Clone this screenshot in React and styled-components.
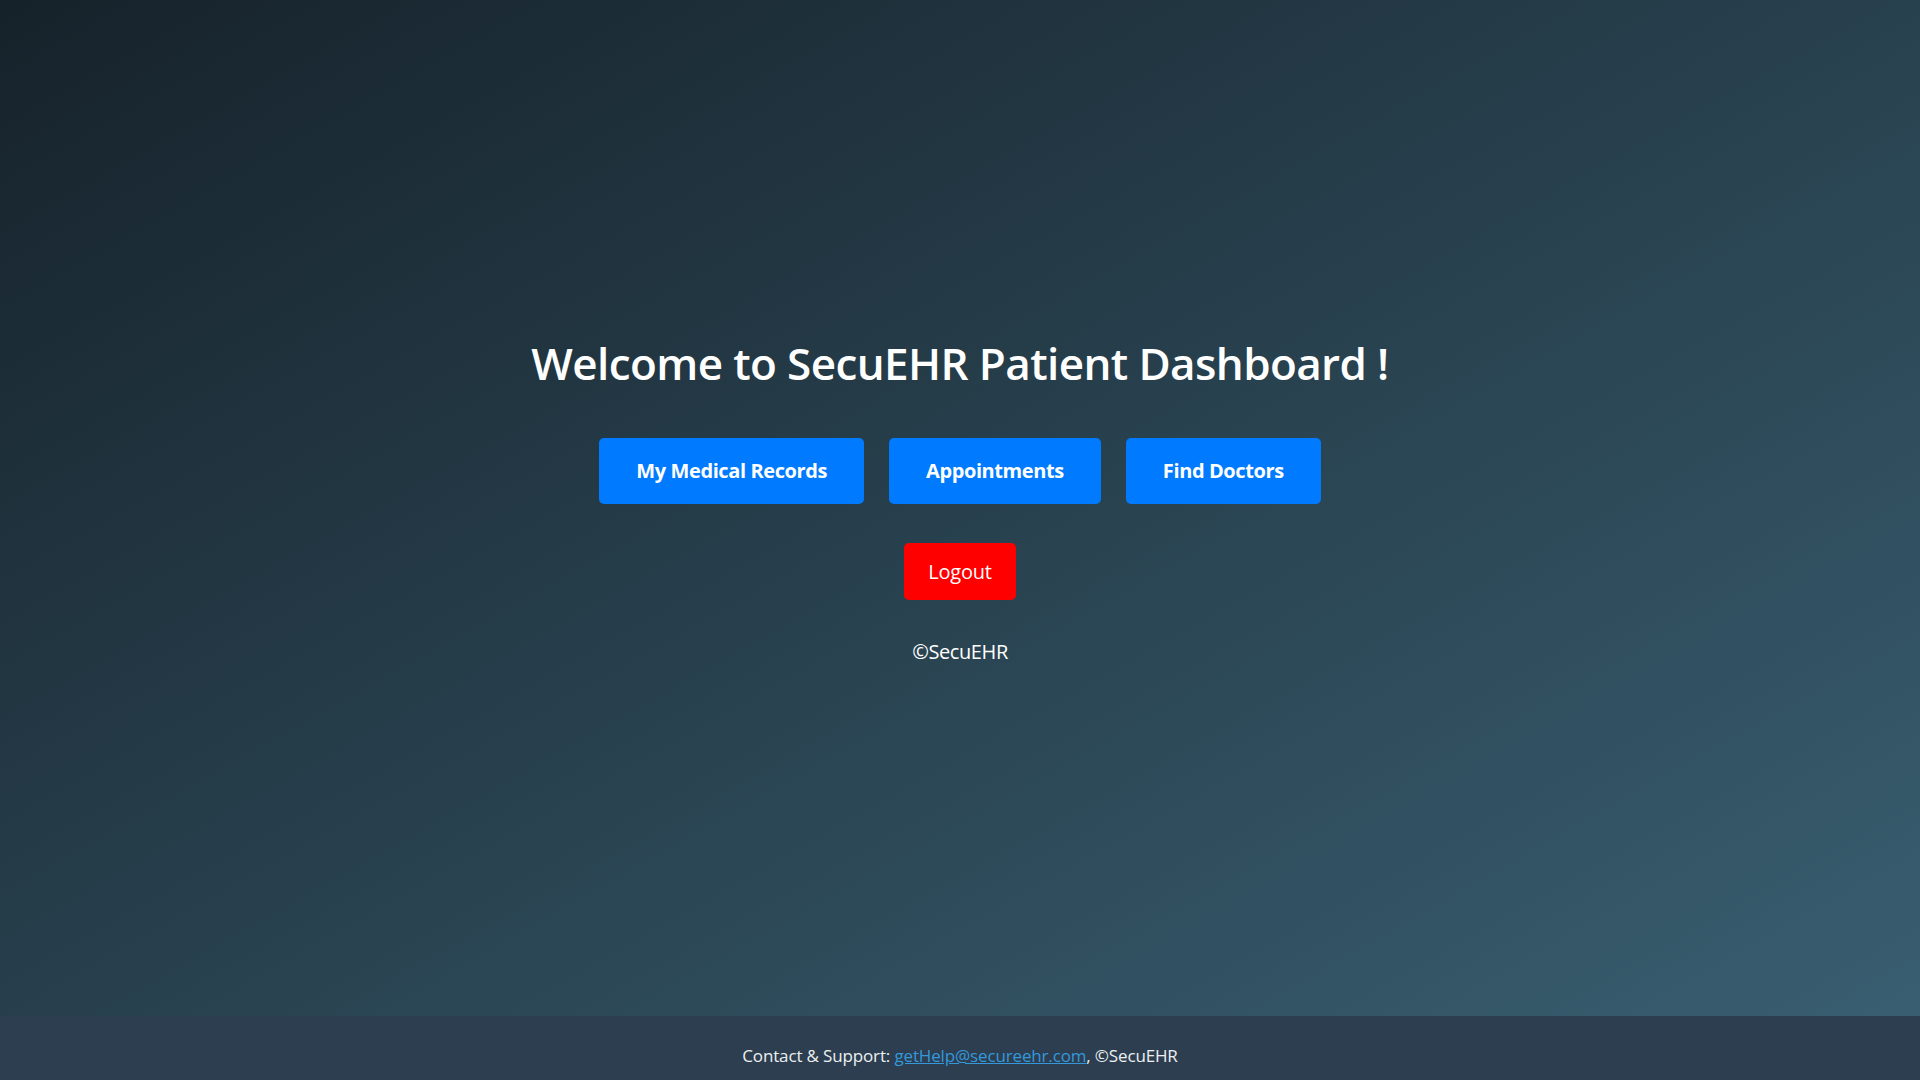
import React from 'react';
import styled, { createGlobalStyle } from 'styled-components';

const GlobalStyle = createGlobalStyle`
  html, body {
    margin: 0;
    padding: 0;
  }
  body {
    font-family: "Open Sans", "Noto Sans", sans-serif;
    color: #fff;
  }
  * {
    box-sizing: border-box;
  }
`;

const buttons = ['My Medical Records', 'Appointments', 'Find Doctors'];

function App() {
  return (
    <Page>
      <GlobalStyle />
      <Main>
        <Title>Welcome to SecuEHR Patient Dashboard !</Title>
        <ButtonRow>
          {buttons.map((label) => (
            <NavButton key={label} type="button">
              {label}
            </NavButton>
          ))}
        </ButtonRow>
        <LogoutButton type="button">Logout</LogoutButton>
        <Copyright>©SecuEHR</Copyright>
      </Main>
      <Footer>
        Contact &amp; Support:{' '}
        <FooterLink href="#">getHelp@secureehr.com</FooterLink>, ©SecuEHR
      </Footer>
    </Page>
  );
}

export default App;

const Page = styled.div`
  display: flex;
  flex-direction: column;
  min-height: 100vh;
  background: linear-gradient(to bottom right, #16222a, #3a6073);
`;

const Main = styled.main`
  flex: 1;
  display: flex;
  flex-direction: column;
  align-items: center;
  justify-content: center;
  padding-bottom: 18px;
`;

const Title = styled.h1`
  margin: 0 0 46px;
  font-size: 44px;
  font-weight: 600;
  line-height: 58px;
  letter-spacing: -0.6px;
  color: #fff;
`;

const ButtonRow = styled.div`
  display: flex;
  gap: 25px;
  margin-bottom: 39px;
`;

const NavButton = styled.button`
  padding: 20px 37px;
  border: none;
  border-radius: 5px;
  font-family: inherit;
  font-size: 20px;
  font-weight: 700;
  line-height: 26px;
  letter-spacing: -0.4px;
  color: #fff;
  background-color: #007bff;
  cursor: pointer;
`;

const LogoutButton = styled.button`
  padding: 15px 24px;
  border: none;
  border-radius: 5px;
  font-family: inherit;
  font-size: 20px;
  line-height: 27px;
  letter-spacing: -0.2px;
  color: #fff;
  background-color: #ff0000;
  cursor: pointer;
`;

const Copyright = styled.p`
  margin: 38px 0 0;
  font-size: 20px;
  line-height: 27px;
  letter-spacing: -0.4px;
`;

const Footer = styled.footer`
  height: 64px;
  padding-top: 28px;
  text-align: center;
  font-size: 17px;
  line-height: 24px;
  letter-spacing: -0.15px;
  color: #ecf0f1;
  background-color: #2c3e50;
`;

const FooterLink = styled.a`
  color: #3498db;
  text-decoration: underline;
`;
